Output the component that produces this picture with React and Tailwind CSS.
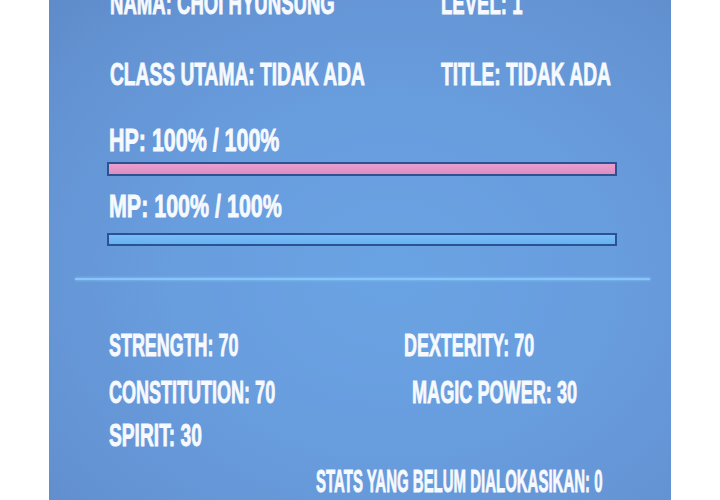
import React from 'react';

const font = "font-['Liberation_Sans',Arial,sans-serif]";

function Label({ children, className = '' }) {
  return (
    <div
      className={`block whitespace-nowrap origin-left text-[32px] leading-[32px] font-bold text-[#f6f9fd] [-webkit-text-stroke:0.9px_#f6f9fd] ${font} ${className}`}
    >
      {children}
    </div>
  );
}

function Bar({ fill, className = '' }) {
  return (
    <div className={`ml-[58px] w-[510px] border-2 border-[#2d5291] ${className}`}>
      <div className={`h-full w-full ${fill}`} />
    </div>
  );
}

export default function App() {
  return (
    <div className="w-[720px] h-[500px] bg-white overflow-hidden">
      <div className="ml-[49px] w-[622px] h-[500px] overflow-hidden bg-[radial-gradient(ellipse_at_55%_55%,#6aa3e3_0%,#689dde_45%,#6493d3_80%,#5e8bca_100%)]">
        {/* top info */}
        <div className="pl-[61px] mt-[-13px] flex">
          <div className="w-[331px] shrink-0">
            <Label className="scale-x-[0.58]">NAMA: CHOI HYUNSUNG</Label>
          </div>
          <Label className="scale-x-[0.58]">LEVEL: 1</Label>
        </div>
        <div className="pl-[61px] mt-[39px] flex">
          <div className="w-[331px] shrink-0">
            <Label className="scale-x-[0.6]">CLASS UTAMA: TIDAK ADA</Label>
          </div>
          <Label className="scale-x-[0.6]">TITLE: TIDAK ADA</Label>
        </div>

        {/* hp / mp */}
        <div className="pl-[60px] mt-[34px]">
          <Label className="scale-x-[0.67]">HP: 100% / 100%</Label>
        </div>
        <Bar fill="bg-[linear-gradient(180deg,#e7a0cf,#df8cc2)]" className="mt-[6px] h-[14px]" />
        <div className="pl-[60px] mt-[14px]">
          <Label className="scale-x-[0.67]">MP: 100% / 100%</Label>
        </div>
        <Bar fill="bg-[linear-gradient(180deg,#78bef8,#66b1f3)]" className="mt-[11px] h-[13px]" />

        {/* divider */}
        <div className="mt-[32px] ml-[26px] mr-[21px] h-[2px] bg-[#86c6f8] shadow-[0_0_3px_#8fcbf8]" />

        {/* stats */}
        <div className="pl-[60px] mt-[49px] flex">
          <div className="w-[295px] shrink-0">
            <Label className="scale-x-[0.56]">STRENGTH: 70</Label>
          </div>
          <Label className="scale-x-[0.56]">DEXTERITY: 70</Label>
        </div>
        <div className="pl-[60px] mt-[15px] flex">
          <div className="w-[303px] shrink-0">
            <Label className="scale-x-[0.563]">CONSTITUTION: 70</Label>
          </div>
          <Label className="scale-x-[0.566]">MAGIC POWER: 30</Label>
        </div>
        <div className="pl-[60px] mt-[11px]">
          <Label className="scale-x-[0.6]">SPIRIT: 30</Label>
        </div>
        <div className="pl-[267px] mt-[14px]">
          <Label className="scale-x-[0.468] text-[29px] leading-[29px]">
            STATS YANG BELUM DIALOKASIKAN: 0
          </Label>
        </div>
      </div>
    </div>
  );
}
